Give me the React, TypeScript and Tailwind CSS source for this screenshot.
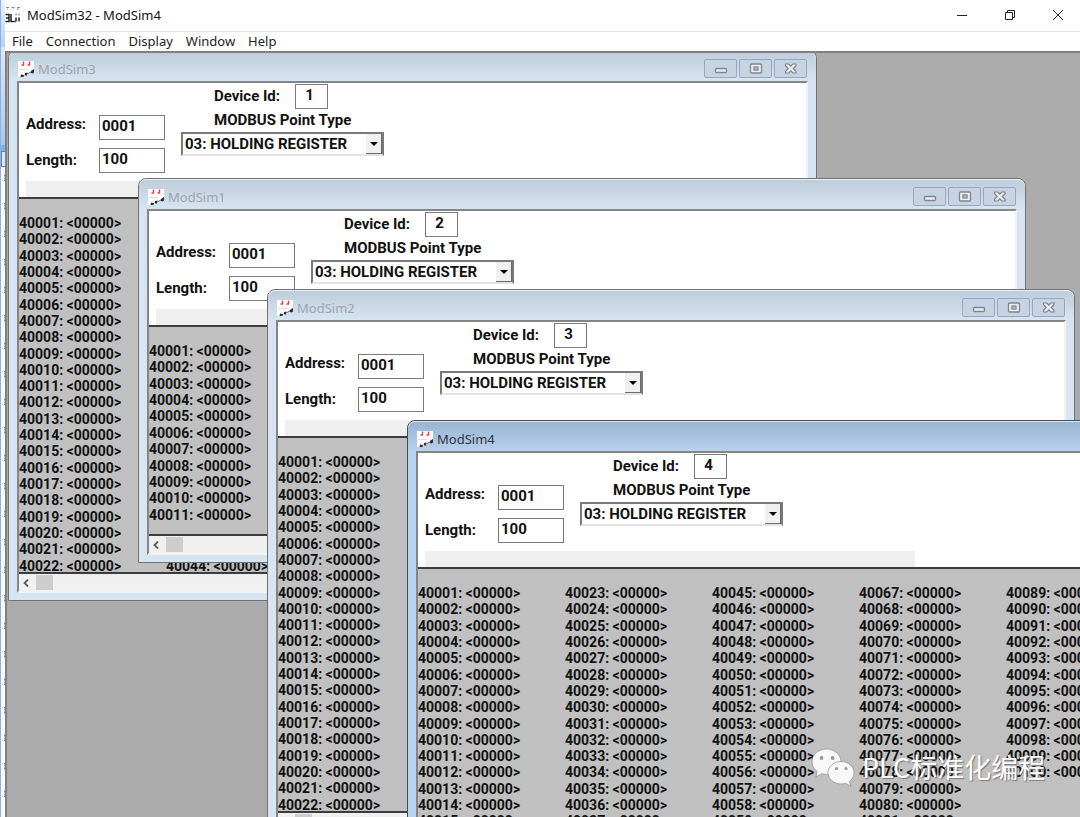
import React from "react";

type ModSim = {
  name: string;
  deviceId: number;
  rowsPerColumn: number;
  active?: boolean;
  frame: string;
  rowsHeight: string;
};

const windows: ModSim[] = [
  { name: "ModSim3", deviceId: 1, rowsPerColumn: 22, frame: "left-px -top-[3px] w-[809px] h-[551px]", rowsHeight: "h-[359px]" },
  { name: "ModSim1", deviceId: 2, rowsPerColumn: 11, frame: "left-[131px] top-[125px] w-[888px] h-[385px]", rowsHeight: "h-[180px]" },
  { name: "ModSim2", deviceId: 3, rowsPerColumn: 22, frame: "left-[260px] top-[236px] w-[808px] h-[551px]", rowsHeight: "h-[359px]" },
  { name: "ModSim4", deviceId: 4, rowsPerColumn: 22, active: true, frame: "left-[400px] top-[367px] w-[808px] h-[551px]", rowsHeight: "h-[359px]" },
];

const menus = ["File", "Connection", "Display", "Window", "Help"];
const REGISTER_COUNT = 100;

function registerColumns(perColumn: number): string[][] {
  const columns: string[][] = [];
  for (let start = 1; start <= REGISTER_COUNT; start += perColumn) {
    const column: string[] = [];
    for (let n = start; n < start + perColumn && n <= REGISTER_COUNT; n++) {
      column.push(`${40000 + n}: <00000>`);
    }
    columns.push(column);
  }
  return columns;
}

function AppIcon() {
  return (
    <svg className="h-4 w-4 shrink-0" viewBox="0 0 16 16" fill="none" aria-hidden="true">
      <path d="M1 0.500h3M2 2h1M6.500 0.500h3M7.500 2h1M12 0.500h3M12 2h2" stroke="#8a8a8a" />
      <path d="M0.500 7.500h3.500v7H0.500M1 11h3M6 7v7.500h3M11 10.500v4M14 10.500v4" stroke="#222" strokeWidth="1.500" />
      <path d="M10.500 7.500h1M13.500 7.500h1M9 14.500h2" stroke="#555" strokeWidth="1.500" />
    </svg>
  );
}

function DocIcon() {
  return (
    <svg className="h-4 w-4 shrink-0" viewBox="0 0 16 16" fill="none" aria-hidden="true">
      <path d="M0 0h16v9l-5 4-6 3H0z" fill="#fff" />
      <path d="M5.500 0.500v3.500M3.500 4h2.500M11.500 0.500v3.500M9.500 4h2.500" stroke="#e8434b" strokeWidth="1.500" />
      <path d="M1 8.500h9" stroke="#dedede" />
      <path d="M16 8l-2.500 1.500-1.500 2 2.500 1L16 11.500zM9.500 11.500l-2.500.5-.5 2.500L9 14.500zM3 13.500l-.5 2.500H5.500l.5-2z" fill="#2e2e2e" />
      <path d="M9 13l3-1.500" stroke="#666" />
    </svg>
  );
}

function Glyph({ kind }: { kind: string }) {
  return (
    <svg className="h-3 w-3.5" viewBox="0 0 14 12" aria-hidden="true">
      {kind === "Minimize" && <rect x="1.500" y="5.500" width="11" height="4" rx="1" fill="#ececec" stroke="#7e8492" strokeWidth="1.300" />}
      {kind === "Maximize" && (
        <g stroke="#7e8492" strokeWidth="1.300">
          <rect x="1.500" y="1" width="11" height="9" rx="1" fill="#ececec" />
          <rect x="5" y="4" width="4" height="3" fill="#b9c4d4" />
        </g>
      )}
      {kind === "Close" && (
        <path d="M1.500 1H4.800L6.800 3.200 8.800 1h3.200v1.700L9.300 5.500l2.700 2.800v1.700H8.800L6.800 7.800 4.800 10H1.500V8.300L4.300 5.500 1.500 2.700z" fill="#ececec" stroke="#7e8492" strokeWidth="1.200" />
      )}
    </svg>
  );
}

const fieldClass =
  "h-[25px] rounded-none border border-[#7a7a7a] bg-white pb-1 text-[15px] leading-5 font-bold text-[#111] outline-none";

function ModSimWindow({ win }: { win: ModSim }) {
  const id = win.name.toLowerCase();
  return (
    <section
      aria-label={win.name}
      className={`absolute flex flex-col rounded-t-lg border px-2 pb-[7px] ${win.frame} ${
        win.active ? "border-[#454b52] bg-[#bad3ec]" : "border-[#6e7276] bg-[#d7e4f2]"
      }`}
    >
      <header
        className={`-mx-2 flex h-[30px] shrink-0 items-start gap-1 rounded-t-lg border-t border-white/50 bg-linear-to-b pr-[9px] pl-[9px] ${
          win.active ? "from-[#98b4d2] to-[#b9d1ea]" : "from-[#bfcddb] to-[#d7e4f2]"
        }`}
      >
        <div className="flex h-[34px] items-center gap-1">
          <DocIcon />
          <h2 className={`font-["Noto_Sans","Liberation_Sans",sans-serif] text-[13px] leading-4 ${win.active ? "text-[#2c3644]" : "text-[#9ea4ab]"}`}>
            {win.name}
          </h2>
        </div>
        <div className="ml-auto flex gap-0.5 pt-[7px]">
          {["Minimize", "Maximize", "Close"].map((kind) => (
            <button
              key={kind}
              type="button"
              aria-label={`${kind} ${win.name}`}
              className="flex h-[19px] w-[33px] items-center justify-center rounded-xs border border-[#98a6bf] bg-[#c5d3e3]"
            >
              <Glyph kind={kind} />
            </button>
          ))}
        </div>
      </header>

      <div className="flex min-h-0 flex-1 flex-col border-2 border-t-[#858585] border-r-[#eef2f6] border-b-[#eef2f6] border-l-[#858585] bg-white font-[Roboto,'Liberation_Sans',sans-serif] text-[15px] font-bold text-[#111]">
        <form className="flex shrink-0 flex-col pl-[7px]">
          <div className="flex h-[98px] items-start">
            <div className="flex w-[73px] flex-col gap-[18px] pt-8 leading-[18px]">
              <label htmlFor={`${id}-address`}>Address:</label>
              <label htmlFor={`${id}-length`}>Length:</label>
            </div>
            <div className="flex flex-col gap-2 pt-8">
              <input id={`${id}-address`} defaultValue="0001" className={`${fieldClass} w-[66px] px-0.5`} />
              <input id={`${id}-length`} defaultValue="100" className={`${fieldClass} w-[66px] px-0.5`} />
            </div>
            <div className="ml-4 flex flex-col pt-px">
              <div className="flex items-center justify-between pr-14 pl-[33px]">
                <label htmlFor={`${id}-device`}>Device Id:</label>
                <input id={`${id}-device`} defaultValue={win.deviceId} className={`${fieldClass} w-[33px] pr-1 text-center`} />
              </div>
              <label htmlFor={`${id}-type`} className="pl-[33px] leading-[23px]">MODBUS Point Type</label>
              <div className="relative w-[203px]">
                <select
                  id={`${id}-type`}
                  className="block h-6 w-full appearance-none rounded-none border-2 border-t-[#7a7a7a] border-r-[#7a7a7a] border-b-[#e4e4e4] border-l-[#7a7a7a] bg-white pl-0.5 text-[15px] leading-5 font-bold text-[#111] outline-none"
                >
                  <option>03: HOLDING REGISTER</option>
                </select>
                <span className="pointer-events-none absolute top-0.5 right-0.5 flex h-5 w-4 items-center justify-center border-r border-b border-[#6b6b6b] bg-[#f0f0f0]">
                  <svg className="h-1 w-2" viewBox="0 0 8 4" aria-hidden="true">
                    <path d="M0 0h8L4 4z" fill="#000" />
                  </svg>
                </span>
              </div>
            </div>
          </div>
          <div className="h-4 w-[490px] bg-[#efefef]" />
        </form>

        <div className="flex min-h-0 flex-1 items-start gap-[42px] overflow-hidden border-y-2 border-[#3c3c3c] bg-[#c0c0c0] pt-4 text-[14px] leading-4">
          {registerColumns(win.rowsPerColumn).map((column) => (
            <ul key={column[0]} className={`flex w-[105px] shrink-0 flex-col ${win.rowsHeight}`}>
              {Array.from({ length: win.rowsPerColumn }, (_, i) => (
                <li key={i} className="min-h-0 flex-1 whitespace-nowrap">{column[i]}</li>
              ))}
            </ul>
          ))}
        </div>

        <div className="flex h-[17px] shrink-0 items-center bg-[#f0f0f0]">
          <button type="button" aria-label={`Scroll ${win.name} left`} className="flex h-full w-[17px] items-center justify-center pr-1">
            <svg className="h-2 w-1.5" viewBox="0 0 6 8" fill="none" aria-hidden="true">
              <path d="M5 0.500L1.500 4 5 7.500" stroke="#5a5a5a" strokeWidth="1.800" />
            </svg>
          </button>
          <div className="h-[15px] w-[17px] bg-[#cdcdcd]" />
        </div>
      </div>
    </section>
  );
}

function BackgroundEdge() {
  return (
    <div className="flex w-[5px] shrink-0 flex-col border-l border-[#8fb0e6] bg-[#fafcff]" aria-hidden="true">
      <div className="h-[47px] bg-linear-to-b from-[#eef4fb] to-[#b4d0f8]" />
      <div className="h-[98px] bg-linear-to-b from-[#dce9f6] to-[#a9c9e8]" />
      <div className="h-1.5 bg-[#7fb2d6]" />
      <div className="h-4 border-y border-l border-[#5a7fd0] bg-[#dbe8fb]" />
      <div className="flex min-h-0 flex-1 flex-col items-end gap-[22px] overflow-hidden pt-2">
        {Array.from({ length: 24 }, (_, i) => (
          <span key={i} className="h-1.5 w-px shrink-0 border-y border-[#777] bg-[#c2c2c2]" />
        ))}
      </div>
    </div>
  );
}

function Watermark() {
  return (
    <div className="absolute top-[694px] left-[804px] flex items-center gap-[7px]">
      <svg className="h-10 w-11" viewBox="0 0 44 40" aria-hidden="true">
        <g fill="#f8f8f8" stroke="#8c8c8c" strokeWidth="0.700">
          <path d="M15.500 2C7.500 2 1 7.600 1 14.800c0 4 2 7.400 5.200 9.700L4.800 30l6-3.300c1.500.4 3 .6 4.700.6 8 0 14.500-5.500 14.500-12.500S23.500 2 15.500 2z" />
          <path d="M30 14.500c-7.200 0-13 5-13 11.200S22.800 37 30 37c1.600 0 3.100-.3 4.500-.7l5.500 2.900-1.600-4.700c2.900-2.100 4.600-5.200 4.600-8.800 0-6.200-5.800-11.200-13-11.200z" />
        </g>
        <g fill="#999">
          <circle cx="10.500" cy="11" r="1.900" />
          <circle cx="21.500" cy="11" r="1.900" />
          <circle cx="25.500" cy="21.500" r="1.600" />
          <circle cx="35" cy="21.500" r="1.600" />
        </g>
      </svg>
      <p className="font-['Noto_Sans_CJK_SC',sans-serif] text-[27px] leading-10 font-normal whitespace-nowrap text-white [text-shadow:1px_1px_1px_#777]">
        PLC标准化编程
      </p>
    </div>
  );
}

export default function App() {
  return (
    <div className="flex h-screen overflow-hidden bg-white">
      <BackgroundEdge />
      <main className="flex min-w-0 flex-1 flex-col">
        <header className="flex h-8 shrink-0 items-center border-b border-[#e5e5e5] pb-0.5 font-['Noto_Sans','Liberation_Sans',sans-serif]">
          <AppIcon />
          <h1 className="ml-1.5 text-[13px] leading-4 text-[#111]">ModSim32 - ModSim4</h1>
          <div className="ml-auto flex gap-1">
            <button type="button" aria-label="Minimize" className="flex h-7 w-11 items-center justify-center">
              <svg className="h-3 w-3" viewBox="0 0 12 12" stroke="#222" aria-hidden="true"><path d="M1 6.500h10" /></svg>
            </button>
            <button type="button" aria-label="Restore" className="flex h-7 w-11 items-center justify-center">
              <svg className="h-3 w-3" viewBox="0 0 12 12" stroke="#222" fill="none" aria-hidden="true">
                <path d="M1.500 3.500h7v7h-7zM3.500 3V1.500h7v7H9" />
              </svg>
            </button>
            <button type="button" aria-label="Close" className="flex h-7 w-11 items-center justify-center">
              <svg className="h-3 w-3" viewBox="0 0 12 12" stroke="#222" aria-hidden="true"><path d="M1 1l10 10M11 1L1 11" /></svg>
            </button>
          </div>
        </header>
        <nav className="flex h-[19px] shrink-0 items-center gap-[13px] pb-0.5 pl-[7px] font-['Noto_Sans','Liberation_Sans',sans-serif] text-[13px] leading-4 text-[#222]">
          {menus.map((menu) => (
            <button key={menu} type="button">{menu}</button>
          ))}
        </nav>
        <div className="relative min-h-0 flex-1 overflow-hidden border-t-2 border-l-2 border-[#808080] bg-[#ababab]">
          {windows.map((win) => (
            <ModSimWindow key={win.name} win={win} />
          ))}
          <Watermark />
        </div>
      </main>
    </div>
  );
}
